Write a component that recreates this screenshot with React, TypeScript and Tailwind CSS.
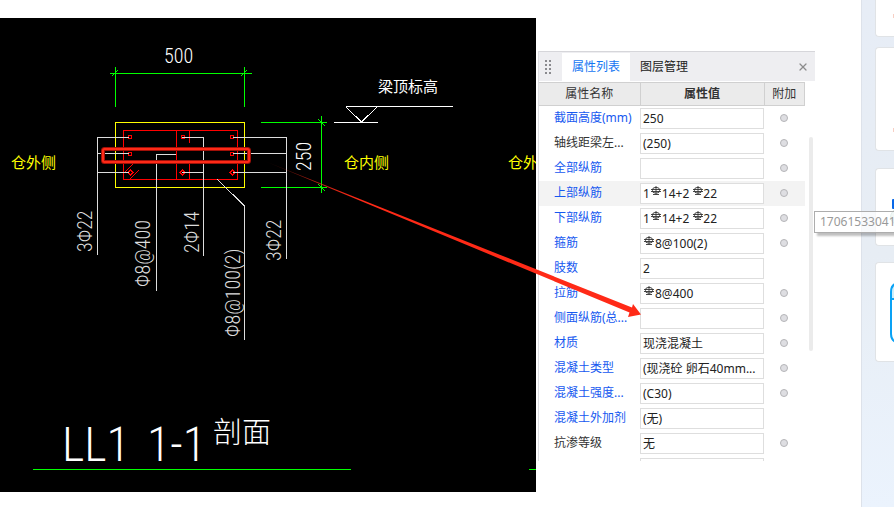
import { X } from "lucide-react";

type Row = {
  label: string;
  value: string;
  marks?: "pair" | "single";
  plain?: boolean;
  extra?: boolean;
  active?: boolean;
};

// Wide spaces keep room for the rebar grade sign drawn above the field.
const GAP = "\u2003";
const WIDE_GAP = "\u2003\u2009";

const rows: Row[] = [
  { label: "截面高度(mm)", value: "250", extra: true },
  { label: "轴线距梁左...", value: "(250)", plain: true, extra: true },
  { label: "全部纵筋", value: "", extra: true },
  { label: "上部纵筋", value: `1${GAP}14+2${WIDE_GAP}22`, marks: "pair", extra: true, active: true },
  { label: "下部纵筋", value: `1${GAP}14+2${WIDE_GAP}22`, marks: "pair", extra: true },
  { label: "箍筋", value: `${GAP}8@100(2)`, marks: "single", extra: true },
  { label: "肢数", value: "2" },
  { label: "拉筋", value: `${GAP}8@400`, marks: "single", extra: true },
  { label: "侧面纵筋(总...", value: "", extra: true },
  { label: "材质", value: "现浇混凝土", extra: true },
  { label: "混凝土类型", value: "(现浇砼 卵石40mm...", extra: true },
  { label: "混凝土强度...", value: "(C30)", extra: true },
  { label: "混凝土外加剂", value: "(无)" },
  { label: "抗渗等级", value: "无", plain: true, extra: true },
  { label: "", value: "" },
];

function RebarSign() {
  return (
    <svg viewBox="0 0 10 10" className="size-[10px]" fill="none" stroke="#333" aria-hidden="true">
      <path d="M5 0V8.500M0 3.500H10M0 5.500H10M2 8.500H8" strokeWidth="0.900" />
      <rect x="1.500" y="1.500" width="7" height="5.500" rx="2.500" strokeWidth="0.900" />
    </svg>
  );
}

function Tick({ x, y }: { x: number; y: number }) {
  return <path d={`M${x - 3} ${y + 3}L${x + 3} ${y - 3}`} />;
}

function VerticalText({ x, y, children }: { x: number; y: number; children: string }) {
  return (
    <text transform={`translate(${x} ${y}) rotate(-90)`} fontSize="20">
      {children}
    </text>
  );
}

function Drawing() {
  return (
    <svg
      viewBox="0 18 536 474"
      className="relative z-10 h-auto w-full overflow-visible font-['Roboto_Condensed','Noto_Sans_CJK_SC',sans-serif] font-light"
      fill="none"
      role="img"
      aria-label="LL1 1-1 剖面"
    >
      <defs>
        <linearGradient id="tail" gradientUnits="userSpaceOnUse" x1="262" y1="160" x2="360" y2="200">
          <stop offset="0" stopColor="#ff2a17" stopOpacity="0" />
          <stop offset="0.6" stopColor="#ff2a17" stopOpacity="0.8" />
          <stop offset="1" stopColor="#ff2a17" />
        </linearGradient>
        <clipPath id="sheet">
          <rect x="0" y="18" width="536" height="474" />
        </clipPath>
      </defs>
      <rect x="0" y="18" width="536" height="474" fill="#000" />

      <g shapeRendering="crispEdges">
        <g stroke="#0f0">
          <path d="M110 73.500H252M115.500 67V107M244.500 67V107" />
          <path d="M261 122.500H327M261 187.500H327M321.500 116V193" />
          <path d="M33 469.500H351M529 469.500H536" />
          <Tick x={115} y={73} />
          <Tick x={244} y={73} />
          <path d="M318 119L325 126M318 184L325 191" />
        </g>
        <rect x="115.500" y="122.500" width="129" height="65" stroke="#ff0" />
        <g stroke="#f00">
          <rect x="123.500" y="130.500" width="114" height="49" />
          <path d="M176.500 130V179M189.500 130V143M189.500 164V179" />
          <path d="M125 172L134 163M130 179L139 170" />
          <rect x="128.500" y="135.500" width="3" height="3" />
          <rect x="181.500" y="135.500" width="3" height="3" />
          <rect x="230.500" y="135.500" width="3" height="3" />
          <rect x="128.500" y="152.500" width="3" height="3" />
          <rect x="230.500" y="152.500" width="3" height="3" />
          <path d="M130.500 170L133 172.500L130.500 175L128 172.500ZM182.500 170L185 172.500L182.500 175L180 172.500ZM232.500 170L235 172.500L232.500 175L230 172.500Z" />
        </g>
        <g stroke="#ddd">
          <path d="M129 137.500H97.500V255M97 153.500H129M97 172.500H129" />
          <path d="M176 154.500H156.500V291" />
          <path d="M182 137.500H203.500V256M182 172.500H203" />
          <path d="M233 137.500H286.500V259M233 153.500H286M233 172.500H286" />
          <path d="M217 179L244.500 206V340" />
        </g>
        <path d="M346 106.500H453M334 122.500H378M346 107L361.500 122L377 107" stroke="#fff" />
      </g>

      <g clipPath="url(#sheet)">
        <g fill="#fff">
          <text x="164" y="63" fontSize="20">500</text>
          <text x="378" y="92" fontSize="15" className="font-normal">梁顶标高</text>
          <text x="62" y="461" fontSize="48">LL1</text>
          <text x="147" y="461" fontSize="48">1-1</text>
          <text x="213" y="443" fontSize="29">剖面</text>
          <VerticalText x={311} y={171}>250</VerticalText>
        </g>
        <g fill="#ff0" fontSize="15" className="font-normal">
          <text x="11" y="168">仓外侧</text>
          <text x="344" y="168">仓内侧</text>
          <text x="508" y="168">仓外侧</text>
        </g>
        <g fill="#ddd">
          <VerticalText x={92} y={252}>3Φ22</VerticalText>
          <VerticalText x={150} y={287}>Φ8@400</VerticalText>
          <VerticalText x={199} y={253}>2Φ14</VerticalText>
          <VerticalText x={240} y={337}>Φ8@100(2)</VerticalText>
          <VerticalText x={281} y={261}>3Φ22</VerticalText>
        </g>
      </g>

      <rect x="103" y="149" width="146" height="13" rx="1.500" stroke="#a01008" strokeWidth="4" />
      <rect x="103" y="149" width="146" height="13" rx="1.500" stroke="#ff2a17" strokeWidth="2" />
      <path d="M262 160L632 307.500L633 304L641 314.500L628 317L629.500 312.500Z" fill="url(#tail)" />
    </svg>
  );
}

function PropertyPanel() {
  return (
    <section className="relative h-[410px] w-[277px] shrink-0 overflow-hidden border-l border-[#dcdce0] bg-white">
      <header className="flex h-[30px] items-center border-t border-[#d6d6da] bg-[#eeeef1]">
        <svg viewBox="0 0 8 16" className="mr-[10px] ml-[5px] h-4 w-2" fill="#8a8a8e" aria-hidden="true">
          <path d="M1 1h2v2H1zM5 1h2v2H5zM1 5h2v2H1zM5 5h2v2H5zM1 9h2v2H1zM5 9h2v2H5zM1 13h2v2H1zM5 13h2v2H5z" />
        </svg>
        <button className="h-7 w-[68px] bg-white text-[#1476f2]">属性列表</button>
        <button className="h-7 w-[68px] text-[#222]">图层管理</button>
        <button className="mr-[6px] ml-auto" aria-label="关闭">
          <X className="size-3 text-[#8c8c8c]" strokeWidth={2.5} />
        </button>
      </header>
      <table className="mt-px w-[266px] table-fixed border-collapse">
        <thead>
          <tr className="h-[23px] bg-[#ebebeb] text-[#333]">
            <th className="w-[101px] border border-l-0 border-[#d0d0d0] p-0 font-normal">属性名称</th>
            <th className="w-[124px] border border-[#d0d0d0] p-0 font-semibold">属性值</th>
            <th className="border border-[#d0d0d0] p-0 font-normal">附加</th>
          </tr>
        </thead>
        <tbody>
          {rows.map((row, i) => (
            <tr key={i} className={row.active ? "h-[25px] bg-[#f3f3f3]" : "h-[25px]"}>
              <td className="overflow-visible p-0 pl-[15px] whitespace-nowrap">
                <label htmlFor={`field-${i}`} className={row.plain ? "text-[#333]" : "text-[#1658f0]"}>
                  {row.label}
                </label>
              </td>
              <td className="relative p-0">
                <input
                  id={`field-${i}`}
                  aria-label={row.label || "属性值"}
                  defaultValue={row.value}
                  className="block h-[21px] w-full border border-[#dedede] bg-white px-[2px] text-[#222] outline-none"
                />
                {row.marks === "pair" && (
                  <span className="pointer-events-none absolute top-[5px] left-[11px] flex gap-8">
                    <RebarSign />
                    <RebarSign />
                  </span>
                )}
                {row.marks === "single" && (
                  <span className="pointer-events-none absolute top-[5px] left-1">
                    <RebarSign />
                  </span>
                )}
              </td>
              <td className="p-0">
                {row.extra && (
                  <input
                    type="checkbox"
                    aria-label={`${row.label} 附加`}
                    className="mx-auto block size-2 appearance-none rounded-full border border-[#b5b5b8] bg-[#dedee2]"
                  />
                )}
              </td>
            </tr>
          ))}
        </tbody>
      </table>
      <div className="absolute top-[86px] right-[2px] h-[214px] w-1 rounded-full bg-[#ebebeb]" />
    </section>
  );
}

function SideCards() {
  return (
    <aside className="flex w-[33px] shrink-0 flex-col overflow-hidden border-l border-[#dde2ea] bg-gradient-to-b from-[#e7edf6] via-[#e7edf4] to-[#ebf3fd] pl-[13px]">
      <div className="flex h-[37px] justify-end rounded-bl-sm border-b border-l border-[#e0e3e6] bg-white pt-[14px]">
        <span className="h-1 w-px bg-[#f7cfc4]" />
      </div>
      <div className="mt-[10px] flex h-[104px] items-end justify-end rounded-l-sm border border-r-0 border-[#e0e3e6] bg-white pb-[18px]">
        <span className="h-1 w-px bg-[#f7cfc4]" />
      </div>
      <div className="mt-[17px] flex h-[78px] flex-col items-end rounded-l-sm border border-r-0 border-[#e0e3e6] bg-white pt-[30px]">
        <svg viewBox="0 0 4 26" className="h-[26px] w-1" aria-hidden="true">
          <rect x="2" y="0" width="6" height="10" rx="1" fill="#0868e8" />
          <circle cx="8" cy="18" r="7.500" fill="#cfe5e0" stroke="#9fc8c0" />
        </svg>
      </div>
      <div className="mt-4 flex h-[100px] justify-end rounded-l-sm border border-r-0 border-[#e0e3e6] bg-white pt-[19px]">
        <svg viewBox="0 0 4 62" className="h-[62px] w-1" fill="none" aria-hidden="true">
          <path d="M8 1Q1 2 1 10V52Q1 59 8 61" fill="#fff" />
          <path d="M8 1Q1 2 1 10V17H8Z" fill="#cdeefa" />
          <path d="M8 1Q1 2 1 10V52Q1 59 8 61M1 17H8" stroke="#0aa2f5" strokeWidth="2" />
        </svg>
      </div>
    </aside>
  );
}

export default function App() {
  return (
    <main className="relative flex min-h-screen overflow-hidden bg-white font-['Noto_Sans','Noto_Sans_CJK_SC',sans-serif] text-xs">
      <div className="min-w-0 flex-1 pt-[18px]">
        <Drawing />
      </div>
      <div className="mr-[46px] ml-[2px] shrink-0 pt-[51px]">
        <PropertyPanel />
      </div>
      <SideCards />
      <div className="absolute top-[211px] right-0 z-20 flex h-[22px] w-20 items-center overflow-hidden border border-r-0 border-[#adadad] bg-white/70 pl-[5px] whitespace-nowrap text-[#999] shadow-[3px_3px_2px_rgba(0,0,0,0.25)]">
        17061533041
      </div>
    </main>
  );
}
